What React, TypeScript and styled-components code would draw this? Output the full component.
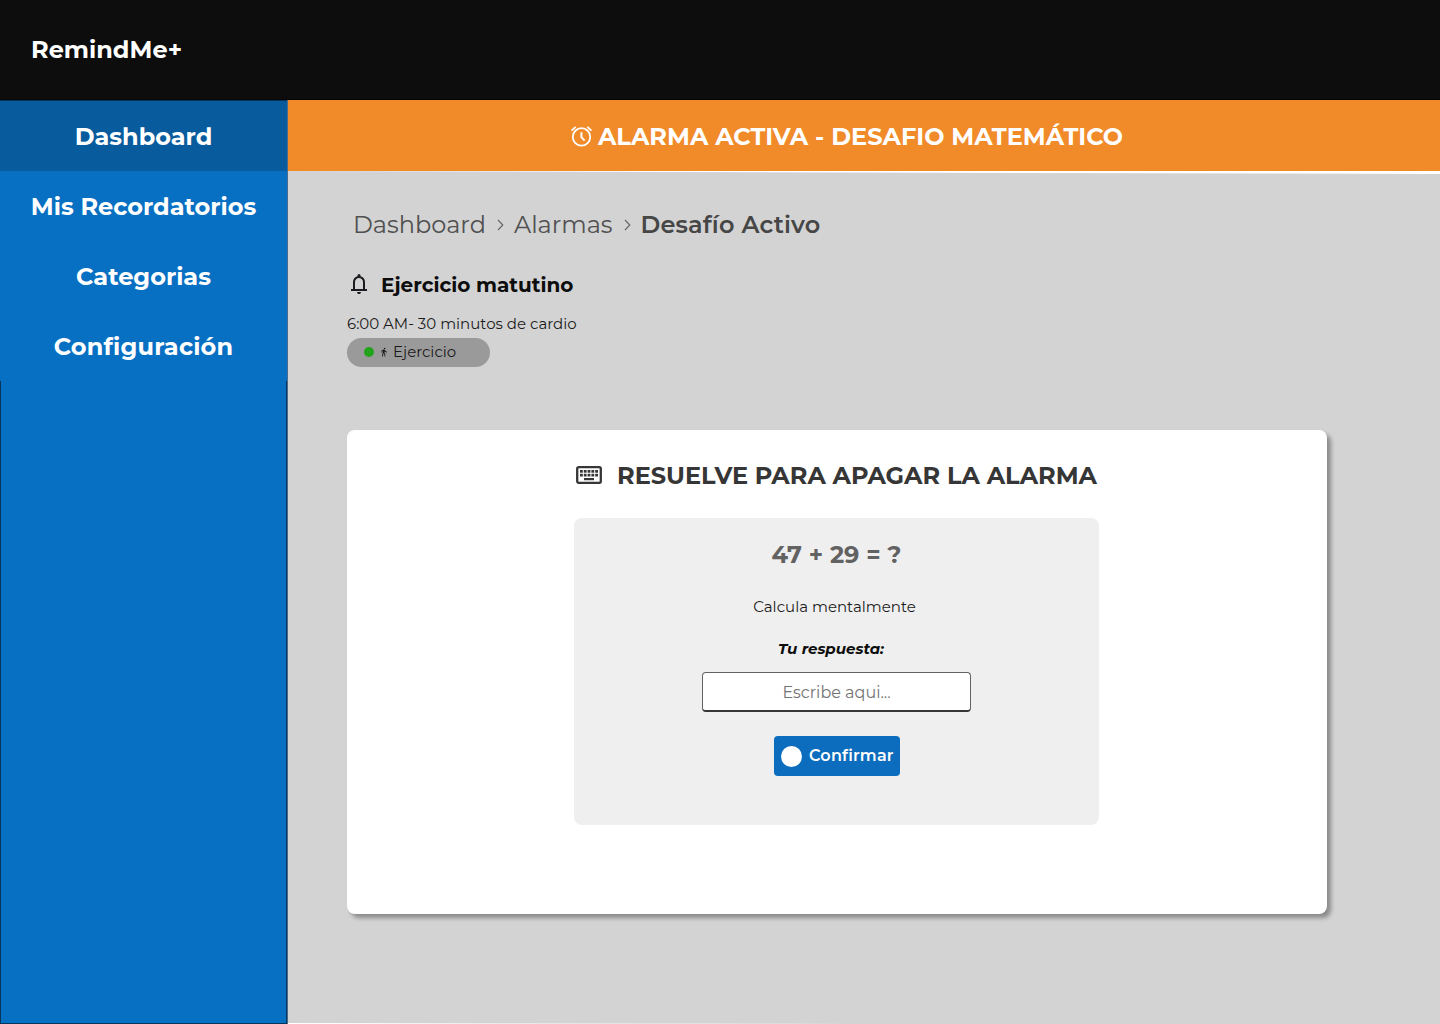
import React from "react";
import styled, { createGlobalStyle } from "styled-components";
import { MdDirectionsWalk } from "react-icons/md";

const GlobalStyle = createGlobalStyle`
  *, *::before, *::after { box-sizing: border-box; }
  html, body { margin: 0; padding: 0; background: #fff; }
  body, input, button { font-family: Montserrat, Inter, "Open Sans", sans-serif; font-variant-ligatures: none; }
  h1, h2, p { margin: 0; }
`;

type Type = { $size: number; $weight?: number; $track?: number };

const Label = styled.span<Type>`
  font-size: ${(p) => p.$size}px;
  font-weight: ${(p) => p.$weight ?? 400};
  letter-spacing: ${(p) => p.$track ?? 0}px;
  white-space: nowrap;
`;

const Page = styled.div`
  width: 1440px;
  height: 1024px;
  display: flex;
  flex-direction: column;
  overflow: hidden;
`;

const Header = styled.header`
  flex: 0 0 100px;
  display: flex;
  align-items: center;
  padding-left: 31px;
  background: #0d0d0d;
  color: #fff;
  border-bottom: 1px solid #060606;
`;

const Body = styled.div`
  flex: 1;
  display: flex;
  min-height: 0;
`;

const Sidebar = styled.nav`
  flex: 0 0 288px;
  display: flex;
  flex-direction: column;
  background: #0870c3;
  border-right: 1px solid #4a6c8c;
`;

const NavItem = styled.a<{ $active?: boolean }>`
  height: ${(p) => (p.$active ? 71 : 70)}px;
  display: flex;
  align-items: center;
  justify-content: center;
  color: #fff;
  background: ${(p) => (p.$active ? "#085b9d" : "transparent")};
  border-top: ${(p) => (p.$active ? "1px solid #06345a" : "0")};
`;

const SidebarRest = styled.div`
  flex: 1;
  border: 1px solid #06345d;
  border-top: 0;
`;

const Content = styled.div`
  flex: 1;
  display: flex;
  flex-direction: column;
  min-width: 0;
`;

const Banner = styled.div`
  flex: 0 0 71px;
  display: flex;
  align-items: center;
  justify-content: center;
  gap: 5px;
  padding: 2px 34px 0 0;
  background: #f18a29;
  color: #fff;
  svg { display: block; margin: -2px 0 0 -1px; }
`;

const Main = styled.main`
  flex: 1;
  padding: 33px 113px 0 59px;
  background: #d3d3d3;
  clip-path: polygon(0 0, 100% 3px, 100% 100%, 50% 100%, 0 calc(100% - 1px));
`;

const Breadcrumb = styled.div`
  display: flex;
  align-items: center;
  height: 40px;
  padding-left: 6px;
  color: #505050;
  svg { display: block; margin: 2px 9px 0 11px; }
`;

const Current = styled(Label)`
  color: #464646;
`;

const Reminder = styled.section`
  height: 186px;
  padding-top: 25px;
`;

const ReminderTitle = styled.h1`
  display: flex;
  align-items: center;
  gap: 10px;
  height: 32px;
  color: #0d0d0d;
  svg { display: block; margin-top: -2px; }
`;

const ReminderDetail = styled.p`
  display: flex;
  align-items: center;
  height: 24px;
  margin-top: 10px;
  color: #1b1b1b;
`;

const Tag = styled.div`
  display: flex;
  align-items: center;
  width: 143px;
  height: 29px;
  margin-top: 3px;
  padding: 0 0 2px 17px;
  border-radius: 15px;
  background: #9a9a9a;
  color: #1b1b1b;
  i { margin-top: 1px; }
  svg { margin: 1px 4px 0 5px; }
`;

const Dot = styled.i<{ $size: number; $color: string }>`
  width: ${(p) => p.$size}px;
  height: ${(p) => p.$size}px;
  border-radius: 50%;
  background: ${(p) => p.$color};
`;

const Card = styled.section`
  height: 484px;
  display: flex;
  flex-direction: column;
  align-items: center;
  padding: 27px 1px 0 0;
  border-radius: 8px;
  background: #fff;
  box-shadow: 4px 4px 4px rgba(0, 0, 0, 0.34);
`;

const CardTitle = styled.h2`
  display: flex;
  align-items: center;
  gap: 15px;
  height: 36px;
  color: #363636;
  svg { display: block; }
`;

const Challenge = styled.div`
  width: 525px;
  height: 307px;
  margin-top: 25px;
  display: flex;
  flex-direction: column;
  align-items: center;
  padding-top: 19px;
  border-radius: 8px;
  background: #efefef;
`;

const Line = styled.p<{ $height: number; $top?: number; $shift?: number; $color: string }>`
  display: flex;
  align-items: center;
  height: ${(p) => p.$height}px;
  margin-top: ${(p) => p.$top ?? 0}px;
  padding-right: ${(p) => p.$shift ?? 0}px;
  color: ${(p) => p.$color};
`;

const Slanted = styled(Label)`
  font-style: italic;
`;

const Answer = styled.input`
  width: 269px;
  height: 40px;
  margin-top: 12px;
  padding: 2px 0 0;
  border: 1px solid #626262;
  border-bottom: 2px solid #363636;
  border-radius: 4px;
  background: #fff;
  text-align: center;
  font-size: 16px;
  outline: 0;
  &::placeholder { color: #747474; opacity: 1; }
`;

const Confirm = styled.button`
  width: 126px;
  height: 40px;
  margin: 24px 0 0 1px;
  display: flex;
  align-items: center;
  gap: 7px;
  padding: 0 0 1px 7px;
  border: 0;
  border-radius: 4px;
  background: #0c6cbd;
  color: #fff;
  i { margin-top: 1px; }
`;

const AlarmIcon = () => (
  <svg width="23" height="22" viewBox="0 0 23 22" fill="none" stroke="#fff" strokeWidth="1.8">
    <circle cx="11.5" cy="11.9" r="8.700" />
    <path d="M11.4 7.200v5l3.200 3.400" strokeWidth="2" />
    <path d="M1.500 5.600 5.700 1.800M21.500 5.600 17.300 1.800" />
  </svg>
);

const BellIcon = () => (
  <svg width="24" height="24" viewBox="0 -960 960 960" fill="#1c1b1f">
    <path d="M160-200v-80h80v-280q0-83 50-147.500T420-792v-28q0-25 17.500-42.500T480-880t42.500 17.500T540-820v28q80 20 130 84.500T720-560v280h80v80H160Zm320-300Zm0 420q-33 0-56.500-23.500T400-160h160q0 33-23.500 56.500T480-80ZM320-280h320v-280q0-66-47-113t-113-47q-66 0-113 47t-47 113v280Z" />
  </svg>
);

const KeyboardIcon = () => (
  <svg width="26" height="18" viewBox="0 0 26 18" fill="#363636">
    <rect x="1.2" y="1.2" width="23.600" height="15.600" rx="1.500" fill="none" stroke="#363636" strokeWidth="2.300" />
    {[4, 7.8, 11.600, 15.400, 19.200].map((x) => (
      <React.Fragment key={x}>
        <rect x={x} y="4" width="2.800" height="2.700" />
        <rect x={x} y="7.800" width="2.800" height="2.700" />
      </React.Fragment>
    ))}
    <rect x="8" y="12" width="10" height="2.200" />
  </svg>
);

const Chevron = () => (
  <svg width="8" height="12" viewBox="0 0 8 12" fill="none" stroke="#686868" strokeWidth="1.200">
    <path d="M1 1 5.800 6 1 11" />
  </svg>
);

const NAV = [
  { name: "Dashboard", active: true },
  { name: "Mis Recordatorios" },
  { name: "Categorias" },
  { name: "Configuración", track: 0.2 },
];

export default function App() {
  return (
    <Page>
      <GlobalStyle />
      <Header>
        <Label $size={24} $weight={700}>RemindMe+</Label>
      </Header>
      <Body>
        <Sidebar>
          {NAV.map((item) => (
            <NavItem key={item.name} $active={item.active}>
              <Label $size={24} $weight={700} $track={item.track}>{item.name}</Label>
            </NavItem>
          ))}
          <SidebarRest />
        </Sidebar>
        <Content>
          <Banner>
            <AlarmIcon />
            <Label $size={24} $weight={700} $track={0.03}>ALARMA ACTIVA - DESAFIO MATEMÁTICO</Label>
          </Banner>
          <Main>
            <Breadcrumb>
              <Label $size={24}>Dashboard</Label>
              <Chevron />
              <Label $size={24}>Alarmas</Label>
              <Chevron />
              <Current $size={24} $weight={600} $track={0.16}>Desafío Activo</Current>
            </Breadcrumb>
            <Reminder>
              <ReminderTitle>
                <BellIcon />
                <Label $size={20} $weight={700}>Ejercicio matutino</Label>
              </ReminderTitle>
              <ReminderDetail>
                <Label $size={15}>6:00 AM- 30 minutos de cardio</Label>
              </ReminderDetail>
              <Tag>
                <Dot $size={10} $color="#22a31c" />
                <MdDirectionsWalk size={10} />
                <Label $size={15}>Ejercicio</Label>
              </Tag>
            </Reminder>
            <Card>
              <CardTitle>
                <KeyboardIcon />
                <Label $size={24} $weight={700}>RESUELVE PARA APAGAR LA ALARMA</Label>
              </CardTitle>
              <Challenge>
                <Line $height={34} $color="#626262">
                  <Label $size={24} $weight={700}>47 + 29 = ?</Label>
                </Line>
                <Line $height={24} $top={23} $shift={4} $color="#1b1b1b">
                  <Label $size={15}>Calcula mentalmente</Label>
                </Line>
                <Line $height={24} $top={18} $shift={11} $color="#0d0d0d">
                  <Slanted $size={15} $weight={700}>Tu respuesta:</Slanted>
                </Line>
                <Answer placeholder="Escribe aqui..." />
                <Confirm>
                  <Dot $size={21} $color="#fff" />
                  <Label $size={16} $weight={600} $track={0.2}>Confirmar</Label>
                </Confirm>
              </Challenge>
            </Card>
          </Main>
        </Content>
      </Body>
    </Page>
  );
}
